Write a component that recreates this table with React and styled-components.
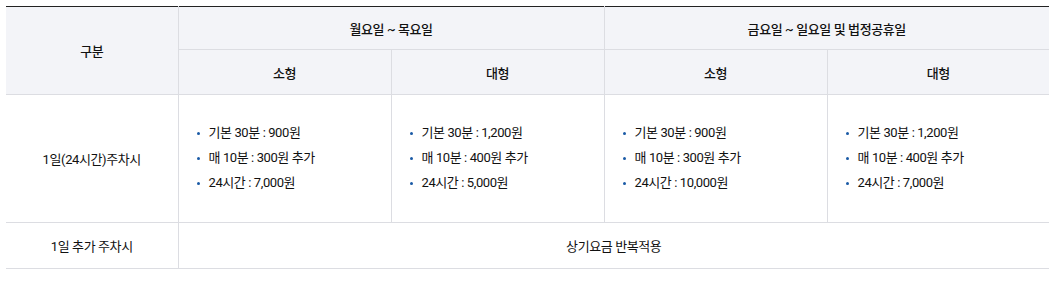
import React from 'react';
import styled, { createGlobalStyle } from 'styled-components';

const GlobalStyle = createGlobalStyle`
    html, body {
        margin: 0;
        padding: 0;
        background: #fff;
    }
    body {
        font-family: Roboto, "Noto Sans CJK KR", sans-serif;
        color: #111;
    }
`;

const Wrapper = styled.div`
    padding: 6px 2px 0 6px;
`;

const Table = styled.table`
    width: 1043px;
    border-collapse: collapse;
    table-layout: fixed;
    border-top: 1px solid #222;
    font-size: 13px;
    letter-spacing: -0.4px;
`;

const Th = styled.th`
    background-color: #f3f4f8;
    border: 1px solid #dcdde2;
    border-top: none;
    font-weight: 500;
    color: #111;
    height: ${props => props.$h}px;
    padding: 0;
    text-align: center;
    vertical-align: middle;
    &:first-child { border-left: none; }
    &:last-child { border-right: none; }
`;

const Td = styled.td`
    border: 1px solid #dcdde2;
    height: ${props => props.$h}px;
    padding: 0;
    text-align: ${props => props.$left ? 'left' : 'center'};
    vertical-align: middle;
    &:first-child { border-left: none; }
    &:last-child { border-right: none; }
`;

const List = styled.ul`
    list-style: none;
    margin: -3px 0 0;
    padding: 0 0 0 17px;
`;

const Item = styled.li`
    position: relative;
    padding-left: 13px;
    line-height: 25px;

    &::before {
        content: '';
        position: absolute;
        left: 1px;
        top: 12px;
        width: 3px;
        height: 3px;
        border-radius: 50%;
        background: #1a5aa6;
    }
`;

const prices = [
    ['기본 30분 : 900원', '매 10분 : 300원 추가', '24시간 : 7,000원'],
    ['기본 30분 : 1,200원', '매 10분 : 400원 추가', '24시간 : 5,000원'],
    ['기본 30분 : 900원', '매 10분 : 300원 추가', '24시간 : 10,000원'],
    ['기본 30분 : 1,200원', '매 10분 : 400원 추가', '24시간 : 7,000원'],
];

export default function App() {
    return (
        <Wrapper>
            <GlobalStyle />
            <Table>
                <colgroup>
                    <col style={{ width: 172 }} />
                    <col style={{ width: 213 }} />
                    <col style={{ width: 213 }} />
                    <col style={{ width: 223 }} />
                    <col />
                </colgroup>
                <thead>
                    <tr>
                        <Th rowSpan={2}>구분</Th>
                        <Th colSpan={2} $h={42}>월요일 ~ 목요일</Th>
                        <Th colSpan={2} $h={42}>금요일 ~ 일요일 및 법정공휴일</Th>
                    </tr>
                    <tr>
                        <Th $h={44}>소형</Th>
                        <Th $h={44}>대형</Th>
                        <Th $h={44}>소형</Th>
                        <Th $h={44}>대형</Th>
                    </tr>
                </thead>
                <tbody>
                    <tr>
                        <Td $h={127}>1일(24시간)주차시</Td>
                        {prices.map((list, i) => (
                            <Td key={i} $h={127} $left>
                                <List>
                                    {list.map(text => <Item key={text}>{text}</Item>)}
                                </List>
                            </Td>
                        ))}
                    </tr>
                    <tr>
                        <Td $h={45}>1일 추가 주차시</Td>
                        <Td colSpan={4} $h={45}>상기요금 반복적용</Td>
                    </tr>
                </tbody>
            </Table>
        </Wrapper>
    );
}
